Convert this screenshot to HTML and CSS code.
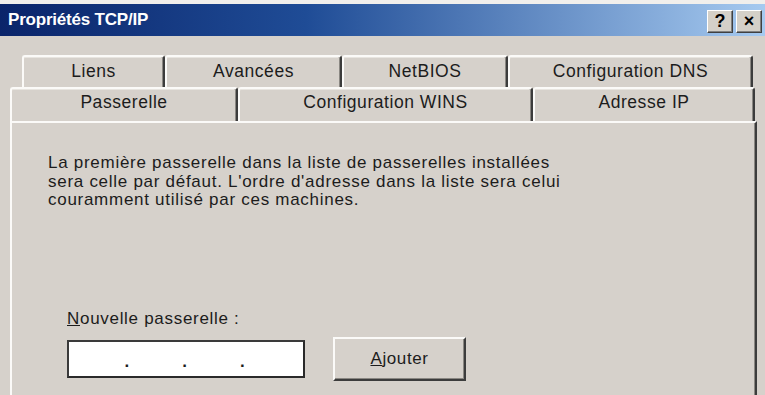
FILE: index.html
```html
<!DOCTYPE html>
<html lang="fr">
<head>
<meta charset="utf-8">
<title>Propriétés TCP/IP</title>
<link rel="stylesheet" href="styles.css">
</head>
<body>
<div class="window">
  <div class="titlebar">
    <span class="title">Propriétés TCP/IP</span>
    <div class="caption-buttons">
      <span class="cap-btn help">?</span>
      <span class="cap-btn close">×</span>
    </div>
  </div>
  <div class="tabs">
    <div class="tab-row back">
      <div class="tab w-liens">Liens</div>
      <div class="tab w-avancees">Avancées</div>
      <div class="tab w-netbios">NetBIOS</div>
      <div class="tab w-dns">Configuration DNS</div>
    </div>
    <div class="tab-row front">
      <div class="tab selected w-passerelle">Passerelle</div>
      <div class="tab w-wins">Configuration WINS</div>
      <div class="tab w-ip">Adresse IP</div>
    </div>
  </div>
  <div class="panel">
    <p class="desc">La première passerelle dans la liste de passerelles installées<br>sera celle par défaut. L'ordre d'adresse dans la liste sera celui<br>couramment utilisé par ces machines.</p>
    <div class="form">
      <div class="label"><u>N</u>ouvelle passerelle :</div>
      <div class="form-row">
        <div class="ipbox">
          <span class="octet"></span><span class="dot">.</span>
          <span class="octet"></span><span class="dot">.</span>
          <span class="octet"></span><span class="dot">.</span>
          <span class="octet"></span>
        </div>
        <div class="button"><u>A</u>jouter</div>
      </div>
    </div>
  </div>
</div>
</body>
</html>
```
FILE: styles.css
```css
html, body {
  margin: 0;
  padding: 0;
  background: #d6d1cb;
  font-family: "Liberation Sans", Arial, sans-serif;
  color: #1c1c1c;
  overflow: hidden;
}

.window {
  width: 765px;
  height: 395px;
  border-top: 4px solid #f1efec;
  box-sizing: border-box;
}

.titlebar {
  height: 32px;
  display: flex;
  align-items: center;
  justify-content: space-between;
  background: linear-gradient(to right, #0a246a 0%, #1f4c96 40%, #a6caf0 100%);
  padding-left: 8px;
}

.title {
  color: #fff;
  font-weight: bold;
  font-size: 17px;
  letter-spacing: -0.2px;
}

.caption-buttons {
  display: flex;
  gap: 3px;
  margin-right: 3px;
  margin-top: 2px;
}

.cap-btn {
  width: 26px;
  height: 23px;
  box-sizing: border-box;
  background: #d4d0c8;
  border-top: 1px solid #fff;
  border-left: 1px solid #fff;
  border-right: 1px solid #404040;
  border-bottom: 1px solid #404040;
  box-shadow: inset -1px -1px 0 #808080;
  display: flex;
  align-items: center;
  justify-content: center;
  font-weight: bold;
  font-size: 18px;
  color: #000;
  line-height: 1;
}

.tabs {
  margin-top: 19px;
}

.tab-row {
  display: flex;
}

.tab-row.back {
  margin-left: 22px;
  height: 32px;
}

.tab-row.front {
  margin-left: 10px;
  height: 34px;
}

.tab {
  box-sizing: border-box;
  border-top: 2px solid #fbfaf8;
  border-left: 2px solid #fbfaf8;
  border-right: 2px solid #3c3c3c;
  border-radius: 3px 3px 0 0;
  display: flex;
  align-items: center;
  justify-content: center;
  font-size: 17.5px;
  letter-spacing: 0.55px;
  color: #1c1c1c;
  box-shadow: inset -1px 0 0 #8a8782, inset 0 1px 0 #e8e5e0;
}

.tab-row.back .tab {
  padding-bottom: 2px;
}

.tab-row.front .tab {
  padding-bottom: 6px;
}

.w-liens { width: 143px; }
.w-avancees { width: 177px; }
.w-netbios { width: 166px; }
.w-dns { width: 245px; }
.w-passerelle { width: 228px; }
.w-wins { width: 295px; }
.w-ip { width: 222px; }

.panel {
  margin-left: 10px;
  width: 747px;
  height: 280px;
  box-sizing: border-box;
  border-top: 2px solid #fbfaf8;
  border-left: 2px solid #fbfaf8;
  border-right: 2px solid #3c3c3c;
  box-shadow: inset -1px 0 0 #8a8782;
  padding: 31px 0 0 36px;
}

.desc {
  margin: 0;
  font-size: 17px;
  line-height: 18.5px;
  letter-spacing: 0.72px;
}

.form {
  margin-top: 100px;
  margin-left: 19px;
}

.label {
  font-size: 17px;
  line-height: 18px;
  letter-spacing: 0.7px;
}

.form-row {
  display: flex;
  align-items: center;
  margin-top: 9px;
}

.ipbox {
  width: 238px;
  height: 38px;
  box-sizing: border-box;
  background: #fff;
  border-top: 2px solid #3a3a3a;
  border-left: 2px solid #3a3a3a;
  border-right: 2px solid #2a2a2a;
  border-bottom: 2px solid #2a2a2a;
  display: flex;
  align-items: center;
  padding: 0 3px 0 0;
}

.octet {
  flex: 1;
}

.dot {
  width: 0;
  display: flex;
  justify-content: center;
  font-size: 17px;
  font-weight: bold;
  line-height: 1;
  margin-top: 6px;
}

.button {
  margin-left: 28px;
  width: 133px;
  height: 44px;
  box-sizing: border-box;
  border-top: 2px solid #fbfaf8;
  border-left: 2px solid #fbfaf8;
  border-right: 2px solid #3c3c3c;
  border-bottom: 2px solid #3c3c3c;
  box-shadow: inset -1px -1px 0 #8a8782;
  display: flex;
  align-items: center;
  justify-content: center;
  font-size: 17px;
  letter-spacing: 0.6px;
}
```
